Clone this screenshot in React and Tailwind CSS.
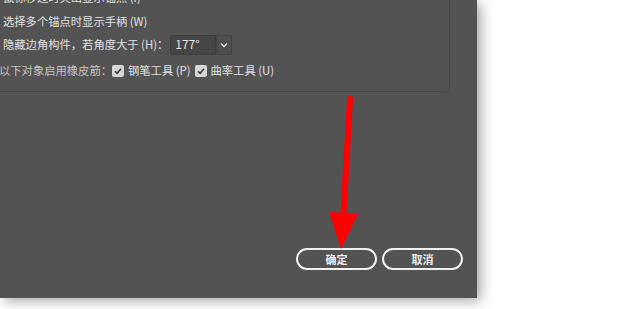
import React from 'react';

const font = { fontFamily: '"Noto Sans CJK SC", "Liberation Sans", sans-serif' };

function Check() {
  return (
    <span className="inline-flex items-center justify-center w-[12px] h-[12px] rounded-[2px] bg-[#d6d6d6]">
      <svg width="10" height="10" viewBox="0 0 10 10">
        <path d="M2 5.2 L4.1 7.3 L8 2.8" fill="none" stroke="#3a3a3a" strokeWidth="1.6" />
      </svg>
    </span>
  );
}

export default function App() {
  return (
    <div className="relative w-[620px] h-[309px] bg-white overflow-hidden" style={font}>
      <div className="relative w-[477px] h-[298px] bg-[#535353] shadow-[4px_3px_12px_rgba(0,0,0,0.35)] overflow-hidden">
        {/* options group */}
        <div className="-ml-[10px] -mt-[10px] w-[460px] h-[102px] border border-[#474747] rounded-[3px] text-[11.3px] text-[#e0e0e0] leading-none">
          <div className="pl-[12px] mt-[1px]">鼠标移过时突出显示锚点 (I)</div>
          <div className="pl-[12px] mt-[13px]">选择多个锚点时显示手柄 (W)</div>
          <div className="pl-[12px] mt-[7px] flex items-center">
            <span>隐藏边角构件，若角度大于 (H)：</span>
            <div className="flex h-[20px] ml-[2px]">
              <div className="w-[46px] bg-[#464646] border border-[#3d3d3d] rounded-l-[2px] pl-[4px] pt-[2px] text-[#e8e8e8] text-[12px]">177°</div>
              <div className="w-[16px] bg-[#4e4e4e] border border-[#444] rounded-r-[2px] flex items-center justify-center">
                <svg width="8" height="6" viewBox="0 0 8 6">
                  <path d="M1 1.5 L4 4.5 L7 1.5" fill="none" stroke="#e0e0e0" strokeWidth="1.3" />
                </svg>
              </div>
            </div>
          </div>
          <div className="pl-[8px] mt-[10px] flex items-center">
            <span className="text-[#c4c4c4]">以下对象启用橡皮筋：</span>
            <Check />
            <span className="ml-[4px]">钢笔工具 (P)</span>
            <span className="ml-[4px]"><Check /></span>
            <span className="ml-[4px]">曲率工具 (U)</span>
          </div>
        </div>

        {/* buttons */}
        <div className="flex justify-end gap-[5px] pr-[14px] mt-[156px]">
          <button className="w-[81px] h-[22px] rounded-full border-2 border-[#f0f0f0] text-[11px] text-[#eeeeee] font-bold">确定</button>
          <button className="w-[81px] h-[22px] rounded-full border-2 border-[#f0f0f0] text-[11px] text-[#eeeeee] font-bold">取消</button>
        </div>
      </div>

      {/* red annotation arrow */}
      <svg className="absolute left-0 top-0" width="620" height="309" viewBox="0 0 620 309">
        <line x1="350" y1="99" x2="343" y2="222" stroke="#ff0000" strokeWidth="6" strokeLinecap="round" />
        <polygon points="329,212 358,214 341,249" fill="#ff0000" />
      </svg>
    </div>
  );
}
